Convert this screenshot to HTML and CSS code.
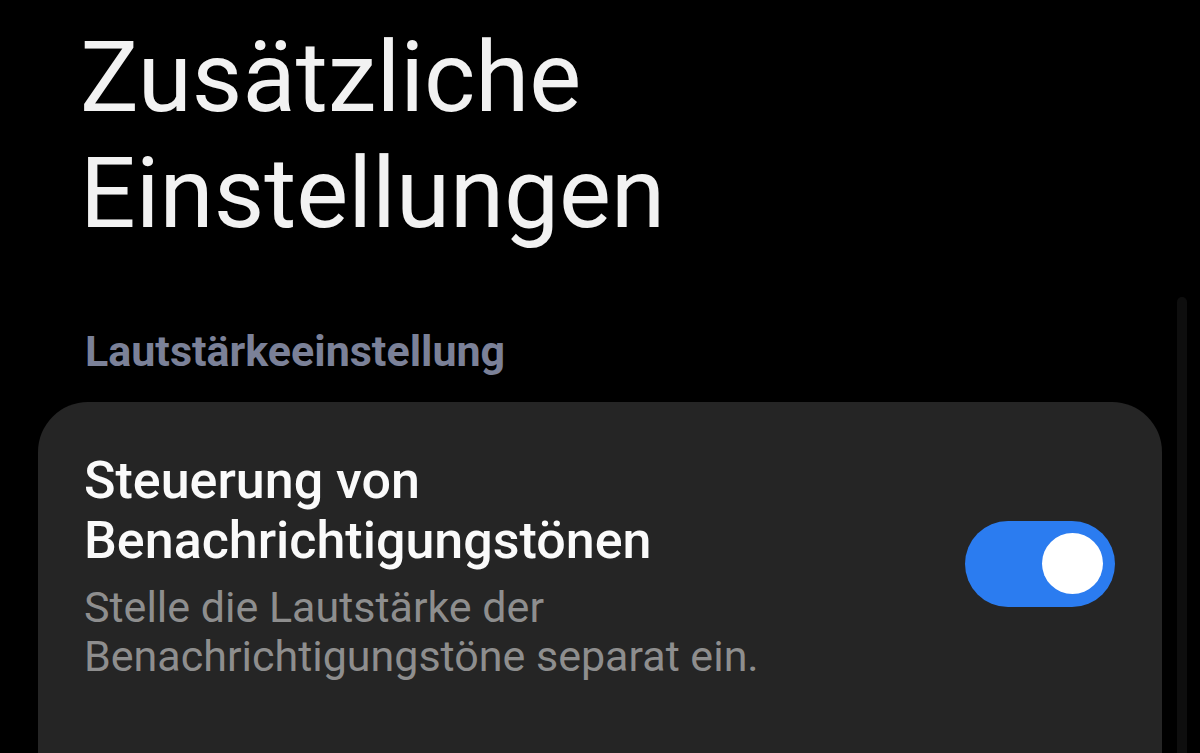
FILE: index.html
```html
<!DOCTYPE html>
<html lang="de">

<head>
  <meta charset="UTF-8" />
  <meta name="viewport" content="width=device-width, initial-scale=1" />
  <title>Zusätzliche Einstellungen</title>
  <link rel="stylesheet" href="styles.css">
</head>

<body>
  <div class="screen">
    <h1 class="page-title">Zusätzliche<br />Einstellungen</h1>

    <h2 class="section-title">Lautstärkeeinstellung</h2>

    <div class="card">
      <div class="setting">
        <div class="setting-text">
          <p class="setting-name">Steuerung von<br />Benachrichtigungstönen</p>
          <p class="setting-desc">Stelle die Lautstärke der<br />Benachrichtigungstöne separat ein.</p>
        </div>
        <div class="switch on">
          <div class="knob"></div>
        </div>
      </div>
    </div>

    <div class="scrollbar"></div>
  </div>
</body>

</html>
```

FILE: styles.css
```css
* {
  margin: 0;
  padding: 0;
  box-sizing: border-box;
  font-family: Roboto, 'Noto Sans', sans-serif;
}

html,
body {
  background-color: #000;
  height: 100%;
  overflow: hidden;
}

.screen {
  position: relative;
  height: 753px;
  padding: 20px 38px 0 38px;
}

.page-title {
  font-size: 98px;
  font-weight: 400;
  line-height: 116px;
  color: #f2f2f2;
  padding-left: 42px;
}

.section-title {
  margin-top: 74px;
  padding-left: 47px;
  font-size: 43px;
  font-weight: 700;
  line-height: 50px;
  color: #7b8198;
}

.card {
  margin-top: 26px;
  background-color: #252525;
  border-radius: 50px 50px 0 0;
  padding: 49px 47px 120px 46px;
}

.setting {
  display: flex;
  align-items: center;
  justify-content: space-between;
}

.setting-name {
  font-size: 52px;
  font-weight: 500;
  line-height: 60px;
  color: #fafafa;
}

.setting-desc {
  margin-top: 12px;
  font-size: 43px;
  line-height: 49px;
  color: #8e8e8e;
}

.switch {
  width: 150px;
  height: 86px;
  border-radius: 43px;
  background-color: #2b7cf0;
  display: flex;
  align-items: center;
  justify-content: flex-end;
  padding-right: 12px;
  margin-bottom: 5px;
}

.knob {
  width: 61px;
  height: 61px;
  border-radius: 50%;
  background-color: #fff;
}

.scrollbar {
  position: absolute;
  left: 1177px;
  top: 297px;
  bottom: 0;
  width: 10px;
  border-radius: 5px 5px 0 0;
  background-color: #0e0e0e;
}
```
